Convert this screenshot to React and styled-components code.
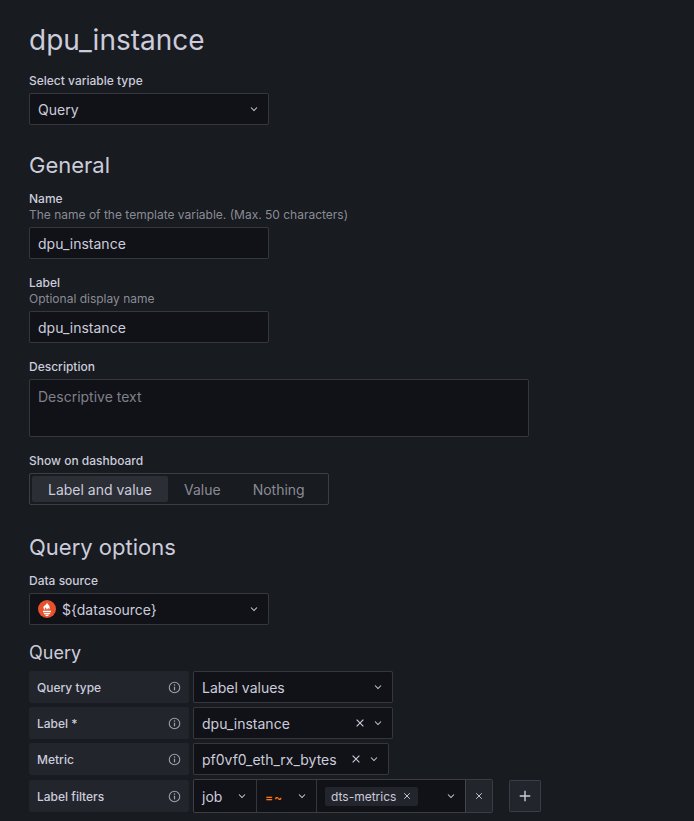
import React from "react";
import styled, { createGlobalStyle } from "styled-components";

const G = createGlobalStyle`
  body{margin:0;background:#181b1f;color:#ccccdc;font-family:Inter,"Noto Sans",sans-serif;}
`;
const Page = styled.div`padding:22px 29px;display:flex;flex-direction:column;`;
const H1 = styled.h1`font-size:28px;font-weight:400;margin:0 0 15px;line-height:36px;`;
const H2 = styled.h2`font-size:22px;font-weight:400;margin:${p => p.$top || 0}px 0 12px;line-height:28px;`;
const H3 = styled.h3`font-size:18px;font-weight:400;margin:17px 0 7px;line-height:22px;`;
const Field = styled.div`display:flex;flex-direction:column;margin-bottom:${p => p.$mb ?? 16}px;`;
const Label = styled.div`font-size:12px;font-weight:500;line-height:16px;margin-bottom:${p => p.$desc ? 0 : 4}px;`;
const Desc = styled.div`font-size:12px;color:rgba(204,204,220,0.65);line-height:16px;margin-bottom:4px;`;
const Box = styled.div`
  box-sizing:border-box;width:${p => p.$w}px;height:${p => p.$h || 32}px;background:#111217;
  border:1px solid rgba(204,204,220,0.2);border-radius:2px;display:flex;align-items:center;
  padding:0 8px;font-size:14px;gap:6px;color:#ccccdc;
`;
const Grow = styled.span`flex:1;white-space:nowrap;`;
const Placeholder = styled.div`
  box-sizing:border-box;width:500px;height:58px;background:#111217;border:1px solid rgba(204,204,220,0.2);
  border-radius:2px;padding:8px;font-size:14px;color:rgba(204,204,220,0.6);
`;
const Radio = styled.div`box-sizing:border-box;display:flex;width:300px;height:32px;border:1px solid rgba(204,204,220,0.2);border-radius:2px;padding:2px;gap:0;`;
const RadioOpt = styled.div`
  padding:0 16px;display:flex;align-items:center;font-size:14px;border-radius:2px;
  background:${p => p.$on ? "#2b2e35" : "transparent"};color:${p => p.$on ? "#ccccdc" : "rgba(204,204,220,0.65)"};
`;
const Row = styled.div`display:flex;gap:4px;margin-bottom:4px;align-items:center;`;
const RowLabel = styled.div`
  box-sizing:border-box;width:160px;height:32px;background:#22252b;border-radius:2px;display:flex;
  align-items:center;justify-content:space-between;padding:0 8px;font-size:12px;font-weight:500;
`;
const Seg = styled.div`
  box-sizing:border-box;height:32px;width:${p => p.$w}px;display:flex;align-items:center;gap:6px;padding:0 8px;
  font-size:14px;background:${p => p.$bg || "#111217"};justify-content:${p => p.$center ? "center" : "flex-start"};
  border-left:${p => p.$first ? "none" : "1px solid rgba(204,204,220,0.2)"};
`;
const Group = styled.div`display:flex;border:1px solid rgba(204,204,220,0.2);border-radius:2px;overflow:hidden;`;
const Tag = styled.span`background:#22252b;border-radius:2px;padding:2px 6px;font-size:12px;display:inline-flex;gap:6px;align-items:center;`;
const Op = styled.span`color:#ff780a;font-weight:600;font-size:12px;letter-spacing:1px;`;
const Plus = styled.div`
  box-sizing:border-box;width:32px;height:32px;margin-left:12px;background:#22252b;border:1px solid rgba(204,204,220,0.15);
  border-radius:2px;display:flex;align-items:center;justify-content:center;
`;

const Chev = () => <svg width="12" height="12" viewBox="0 0 16 16"><path d="M4 6l4 4 4-4" stroke="#ccccdc" strokeWidth="1.4" fill="none"/></svg>;
const X = ({ s = 12 }) => <svg width={s} height={s} viewBox="0 0 16 16"><path d="M3.5 3.5l9 9M12.5 3.5l-9 9" stroke="#ccccdc" strokeWidth="1.5"/></svg>;
const Info = () => <svg width="13" height="13" viewBox="0 0 16 16"><circle cx="8" cy="8" r="6.5" stroke="#9fa0ab" strokeWidth="1.3" fill="none"/><path d="M8 7v4.5" stroke="#9fa0ab" strokeWidth="1.5"/><circle cx="8" cy="5" r="0.9" fill="#9fa0ab"/></svg>;
const Prom = () => (
  <svg width="18" height="18" viewBox="0 0 20 20">
    <circle cx="10" cy="10" r="10" fill="#e6522c"/>
    <path d="M10 3c1 2 3 2.5 3 5.5 0 1.5-1 2.5-1 2.5s.5-1.5-.8-2.5c0 1-1 1.5-1.2 2.5-.3-1-1.4-1.5-1.2-3-1.5 1-1.3 2.2-.8 3-1-.3-2-1.5-2-2.8C6 6 9.5 5.5 10 3z M5.5 12h9v1.6h-9z M6.5 14.5h7v1.3h-7z M8 16.5h4c0 .8-.9 1.5-2 1.5s-2-.7-2-1.5z" fill="#fff"/>
  </svg>
);

export default function App() {
  return (
    <Page>
      <G />
      <H1>dpu_instance</H1>
      <Field $mb={26}>
        <Label>Select variable type</Label>
        <Box $w={240}><Grow>Query</Grow><Chev /></Box>
      </Field>
      <H2>General</H2>
      <Field>
        <Label $desc>Name</Label>
        <Desc>The name of the template variable. (Max. 50 characters)</Desc>
        <Box $w={240}><Grow>dpu_instance</Grow></Box>
      </Field>
      <Field>
        <Label $desc>Label</Label>
        <Desc>Optional display name</Desc>
        <Box $w={240}><Grow>dpu_instance</Grow></Box>
      </Field>
      <Field>
        <Label>Description</Label>
        <Placeholder>Descriptive text</Placeholder>
      </Field>
      <Field $mb={28}>
        <Label>Show on dashboard</Label>
        <Radio>
          <RadioOpt $on>Label and value</RadioOpt>
          <RadioOpt>Value</RadioOpt>
          <RadioOpt>Nothing</RadioOpt>
        </Radio>
      </Field>
      <H2>Query options</H2>
      <Field $mb={0}>
        <Label>Data source</Label>
        <Box $w={240}><Prom /><Grow>${"{datasource}"}</Grow><Chev /></Box>
      </Field>
      <H3>Query</H3>
      <Row>
        <RowLabel>Query type<Info /></RowLabel>
        <Box $w={200}><Grow>Label values</Grow><Chev /></Box>
      </Row>
      <Row>
        <RowLabel>Label *<Info /></RowLabel>
        <Box $w={200}><Grow>dpu_instance</Grow><X /><Chev /></Box>
      </Row>
      <Row>
        <RowLabel>Metric<Info /></RowLabel>
        <Box $w={196}><Grow>pf0vf0_eth_rx_bytes</Grow><X /><Chev /></Box>
      </Row>
      <Row>
        <RowLabel>Label filters<Info /></RowLabel>
        <Group>
          <Seg $first $w={62}><Grow>job</Grow><Chev /></Seg>
          <Seg $w={60}><Grow><Op>=~</Op></Grow><Chev /></Seg>
          <Seg $w={149}><Grow><Tag>dts-metrics <X s={10} /></Tag></Grow><Chev /></Seg>
          <Seg $w={27} $bg="#22252b" $center><X s={14} /></Seg>
        </Group>
        <Plus><svg width="14" height="14" viewBox="0 0 16 16"><path d="M8 2v12M2 8h12" stroke="#ccccdc" strokeWidth="1.6"/></svg></Plus>
      </Row>
    </Page>
  );
}
